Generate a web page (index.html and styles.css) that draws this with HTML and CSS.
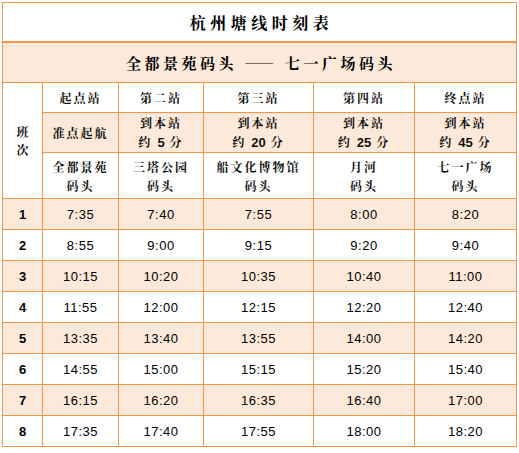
FILE: index.html
```html
<!DOCTYPE html>
<html lang="zh">
<head>
<meta charset="utf-8">
<title>杭州塘线时刻表</title>
<link rel="stylesheet" href="styles.css">
</head>
<body>
<table class="timetable">
  <colgroup>
    <col class="c0"><col class="c1"><col class="c2"><col class="c3"><col class="c4"><col class="c5">
  </colgroup>
  <tr class="title-row"><td colspan="6" class="title">杭州塘线时刻表</td></tr>
  <tr class="sub-row"><td colspan="6" class="subtitle">全都景苑码头 —— 七一广场码头</td></tr>
  <tr class="h1">
    <td rowspan="3" class="cn banci">班<br>次</td>
    <td class="cn">起点站</td><td class="cn">第二站</td><td class="cn">第三站</td><td class="cn">第四站</td><td class="cn">终点站</td>
  </tr>
  <tr class="h2 fill">
    <td class="cn">准点起航</td>
    <td class="cn">到本站<br>约 <b class="num">5</b> 分</td>
    <td class="cn">到本站<br>约 <b class="num">20</b> 分</td>
    <td class="cn">到本站<br>约 <b class="num">25</b> 分</td>
    <td class="cn">到本站<br>约 <b class="num">45</b> 分</td>
  </tr>
  <tr class="h3">
    <td class="cn">全都景苑<br>码头</td>
    <td class="cn">三塔公园<br>码头</td>
    <td class="cn">船文化博物馆<br>码头</td>
    <td class="cn">月河<br>码头</td>
    <td class="cn">七一广场<br>码头</td>
  </tr>
  <tr class="d fill"><th>1</th><td>7:35</td><td>7:40</td><td>7:55</td><td>8:00</td><td>8:20</td></tr>
  <tr class="d"><th>2</th><td>8:55</td><td>9:00</td><td>9:15</td><td>9:20</td><td>9:40</td></tr>
  <tr class="d fill"><th>3</th><td>10:15</td><td>10:20</td><td>10:35</td><td>10:40</td><td>11:00</td></tr>
  <tr class="d"><th>4</th><td>11:55</td><td>12:00</td><td>12:15</td><td>12:20</td><td>12:40</td></tr>
  <tr class="d fill"><th>5</th><td>13:35</td><td>13:40</td><td>13:55</td><td>14:00</td><td>14:20</td></tr>
  <tr class="d"><th>6</th><td>14:55</td><td>15:00</td><td>15:15</td><td>15:20</td><td>15:40</td></tr>
  <tr class="d fill"><th>7</th><td>16:15</td><td>16:20</td><td>16:35</td><td>16:40</td><td>17:00</td></tr>
  <tr class="d"><th>8</th><td>17:35</td><td>17:40</td><td>17:55</td><td>18:00</td><td>18:20</td></tr>
</table>
</body>
</html>
```
FILE: styles.css
```css
html, body {
  margin: 0;
  padding: 0;
  background: #ffffff;
}
body {
  padding: 2px 0 0 2px;
  font-family: "Liberation Sans", Arial, sans-serif;
  color: #000;
}
.timetable {
  border-collapse: collapse;
  table-layout: fixed;
  width: 515px;
}
.c0 { width: 40px; }
.c1 { width: 76px; }
.c2 { width: 85px; }
.c3 { width: 110px; }
.c4 { width: 101px; }
.c5 { width: 102px; }
.timetable td, .timetable th {
  border: 1px solid #f79646;
  padding: 0;
  text-align: center;
  vertical-align: middle;
  overflow: hidden;
  white-space: nowrap;
}
.cn {
  font-family: "Noto Serif CJK SC", "Noto Sans CJK SC", serif;
  font-weight: 700;
  font-size: 12px;
  letter-spacing: 2px;
  line-height: 19px;
  color: #111;
}
.num {
  font-family: "Liberation Sans", Arial, sans-serif;
  font-size: 13px;
  letter-spacing: 0;
}
.title-row { height: 39px; }
.title {
  font-family: "Noto Serif CJK SC", "Noto Sans CJK SC", serif;
  font-weight: 700;
  font-size: 16px;
  letter-spacing: 4.5px;
  border-bottom-width: 2px !important;
  padding-top: 2px !important;
  padding-left: 4px !important;
}
.sub-row { height: 41px; }
.subtitle {
  background: #fde9d9;
  font-family: "Noto Serif CJK SC", "Noto Sans CJK SC", serif;
  font-weight: 700;
  font-size: 15px;
  letter-spacing: 3.5px;
  padding-left: 3px !important;
}
.h1 { height: 30px; }
.h2 { height: 40px; }
.h3 { height: 46px; }
.banci {
  background: #ffffff;
  letter-spacing: 0;
  line-height: 18px;
}
.fill td, .fill th { background: #fde9d9; }
.d { height: 31px; }
.d td {
  font-size: 13px;
  letter-spacing: 0.5px;
}
.d th {
  font-size: 13px;
  font-weight: 700;
}
```
